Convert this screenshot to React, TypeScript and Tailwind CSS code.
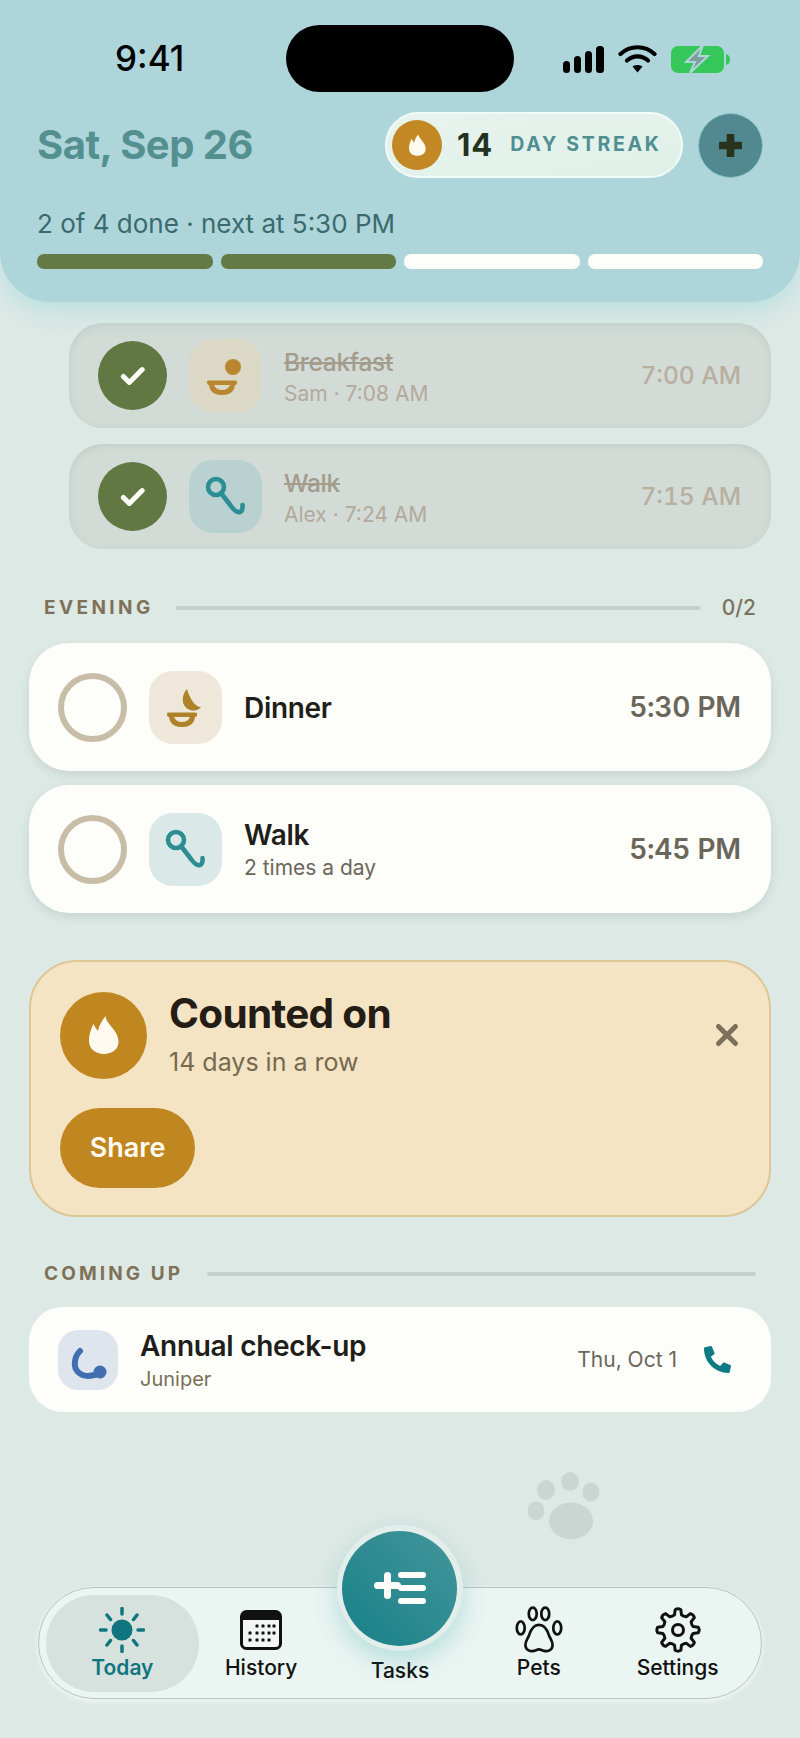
import { FaPhoneAlt } from "react-icons/fa";
import { X } from "lucide-react";

function Flame({ className }: { className?: string }) {
  return (
    <svg viewBox="0 0 30 38" className={className}>
      <path d="M16.5 0 C17 8 29 14 29.5 25 C30 33 23 38 15 38 C7 38 0 33 0 25 C0 18 2.5 12 4.5 8 C6 11 7.5 13 9 15 C10 9 13 5 16.5 0 Z" fill="#fffaf0" />
    </svg>
  );
}

function Bowl({ color }: { color: string }) {
  return (
    <g fill={color}>
      <path fillRule="evenodd" d="M18 42.5 Q18 41.5 20 41.5 H46 Q48 41.5 48 42.5 V44 Q48 46 46 46 L45 50 Q42 56 33 56 Q24 56 21 50 L20 46 Q18 46 18 44 Z M25 46 Q27 51 33 51 Q39 51 41 46 Z" />
    </g>
  );
}

function BreakfastIcon() {
  return (
    <svg viewBox="0 0 73 73" className="w-[73px] h-[73px]">
      <circle cx="44" cy="28" r="8" fill="#b8862f" />
      <Bowl color="#b8862f" />
    </svg>
  );
}

function DinnerIcon() {
  return (
    <svg viewBox="0 0 73 73" className="w-[73px] h-[73px]">
      <path d="M38 18 C32 24 32 36 41 39 C46 40.5 50 39 52 36 C46 36 41 28 38 18 Z" fill="#ad832a" />
      <Bowl color="#ad832a" />
    </svg>
  );
}

function LeashIcon() {
  return (
    <svg viewBox="0 0 73 73" className="w-[73px] h-[73px]" fill="none" stroke="#2c8e93" strokeWidth="4.6" strokeLinecap="round" strokeLinejoin="round">
      <ellipse cx="27" cy="27" rx="8" ry="8" />
      <path d="M32 33 L42 46 Q47 53 51 52 Q54 51 53.5 45" />
    </svg>
  );
}

function Check() {
  return (
    <svg viewBox="0 0 28 24" className="w-[26px] h-[22px]" fill="none" stroke="#fffdf8" strokeWidth="5.5" strokeLinecap="round" strokeLinejoin="round">
      <path d="M3.5 12.5 L10 19 L24 5" />
    </svg>
  );
}

function DoneCard({ icon, tile, title, sub, time }: { icon: React.ReactNode; tile: string; title: string; sub: string; time: string }) {
  return (
    <div className="ml-[69px] w-[702px] h-[105px] rounded-[34px] bg-[#d2dbd6] shadow-[inset_0_2px_6px_rgba(150,165,160,0.25)] flex items-center pl-[29px] pr-[30px]">
      <div className="w-[69px] h-[69px] rounded-full bg-[#617842] flex items-center justify-center">
        <Check />
      </div>
      <div className={`ml-[22px] w-[73px] h-[73px] rounded-[24px] ${tile}`}>{icon}</div>
      <div className="ml-[22px] flex-1 pt-[4px]">
        <div className="text-[24.5px] leading-[29px] font-medium tracking-[-0.3px] text-[#a39b8c] line-through">{title}</div>
        <div className="mt-[3px] text-[21px] leading-[27px] text-[#b3aa9b]">{sub}</div>
      </div>
      <div className="text-[24.5px] font-medium tabular-nums text-[#b8af9f]">{time}</div>
    </div>
  );
}

function TodoCard({ icon, tile, title, sub, time }: { icon: React.ReactNode; tile: string; title: string; sub?: string; time: string }) {
  return (
    <div className="w-[742px] h-[128px] rounded-[40px] bg-[#fdfdf9] shadow-[0_4px_10px_rgba(120,145,140,0.22)] flex items-center pl-[29px] pr-[30px]">
      <div className="w-[69px] h-[69px] rounded-full border-[6px] border-[#c8bda6]" />
      <div className={`ml-[22px] w-[73px] h-[73px] rounded-[24px] ${tile}`}>{icon}</div>
      <div className="ml-[22px] flex-1 pt-[2px]">
        <div className="text-[28px] leading-[34px] font-semibold tracking-[-0.3px] text-[#211d18]">{title}</div>
        {sub && <div className="mt-[2px] text-[21px] leading-[28px] text-[#6c665b]">{sub}</div>}
      </div>
      <div className="text-[28px] font-semibold tracking-[-0.2px] tabular-nums text-[#6b665a]">{time}</div>
    </div>
  );
}

function NavItem({ icon, label, active }: { icon: React.ReactNode; label: string; active?: boolean }) {
  return (
    <div className={`flex flex-col items-center pt-[12px] h-[97px] rounded-[48px] ${active ? "bg-[#d7e1de] -mx-[7px]" : ""}`}>
      <div className="h-[46px] flex items-center justify-center">{icon}</div>
      <div className={`text-[21px] leading-[30px] font-medium ${active ? "text-[#0f7680] font-semibold" : "text-[#111111]"}`}>{label}</div>
    </div>
  );
}

function SunIcon() {
  return (
    <svg viewBox="0 0 46 46" className="w-[46px] h-[46px]" fill="none" stroke="#0f7680" strokeWidth="3.5" strokeLinecap="round">
      <circle cx="23" cy="23" r="10.5" fill="#0f7680" stroke="none" />
      <path d="M23 1.5 V7 M23 39 V44.5 M1.5 23 H7 M39 23 H44.5 M8 8 L11.5 12.5 M38 8 L34.5 12.5 M8 38 L11.5 33.5 M38 38 L34.5 33.5" />
    </svg>
  );
}

function CalIcon() {
  return (
    <svg viewBox="0 0 42 40" className="w-[42px] h-[40px]">
      <rect x="1.5" y="1.5" width="39" height="37" rx="5" fill="#f2f7f5" stroke="#111" strokeWidth="3" />
      <path d="M1.5 6.5 a5 5 0 0 1 5 -5 h29 a5 5 0 0 1 5 5 V10 H1.5 Z" fill="#111" />
      <g fill="#111">
        {[[17, 16], [23, 16], [29, 16], [34, 16], [10, 23], [17, 23], [23, 23], [29, 23], [34, 23], [10, 30], [17, 30], [23, 30], [29, 30]].map(([x, y]) => (
          <rect key={`${x}-${y}`} x={x - 1.5} y={y - 1.5} width="3" height="3" rx="0.5" />
        ))}
      </g>
    </svg>
  );
}

function PawOutline() {
  return (
    <svg viewBox="0 0 46 46" className="w-[48px] h-[48px]" fill="none" stroke="#111" strokeWidth="2.6" strokeLinejoin="round">
      <ellipse cx="17" cy="7.5" rx="3.8" ry="6" />
      <ellipse cx="29" cy="7.5" rx="3.8" ry="6" />
      <ellipse cx="5.5" cy="21" rx="3.8" ry="6.2" />
      <ellipse cx="40.5" cy="21" rx="3.8" ry="6.2" />
      <path d="M23 18 C18 18 15 23 13.5 28 C12 32 9.5 34 10 38 C10.5 42.5 15 44 18 43 C20 42.4 21.5 41.5 23 41.5 C24.5 41.5 26 42.4 28 43 C31 44 35.5 42.5 36 38 C36.5 34 34 32 32.5 28 C31 23 28 18 23 18 Z" />
    </svg>
  );
}

function GearIcon() {
  const pt = (r: number, deg: number) => {
    const a = (deg * Math.PI) / 180;
    return `${(23 + r * Math.cos(a)).toFixed(2)} ${(23 + r * Math.sin(a)).toFixed(2)}`;
  };
  let d = "";
  for (let i = 0; i < 8; i++) {
    const a = i * 45 - 90;
    d += `${i === 0 ? "M" : "L"}${pt(15.5, a - 13)} L${pt(20.5, a - 8)} Q${pt(22, a)} ${pt(20.5, a + 8)} L${pt(15.5, a + 13)} Q${pt(14.5, a + 22.5)} ${pt(15.5, a + 32)} `;
  }
  return (
    <svg viewBox="0 0 46 46" className="w-[46px] h-[46px]" fill="none" stroke="#111" strokeWidth="3" strokeLinejoin="round">
      <path d={`${d}Z`} />
      <circle cx="23" cy="23" r="5.5" />
    </svg>
  );
}

export default function App() {
  return (
    <div className="relative w-[800px] h-[1738px] overflow-hidden bg-[#dde9e5] [font-family:Inter,sans-serif]">
      <header className="relative h-[302px] rounded-b-[50px] bg-[#aed5da] shadow-[0_8px_24px_rgba(170,220,225,0.7)] px-[37px]">
        <div className="h-[112px] flex items-start">
          <div className="w-[249px] pt-[25px] pl-[78px] text-[35px] leading-[67px] font-medium text-black">9:41</div>
          <div className="mt-[25px] w-[228px] h-[67px] rounded-full bg-black" />
          <div className="ml-[49px] mt-[45px] flex items-center gap-[14px]">
            <svg viewBox="0 0 41 27" className="w-[41px] h-[27px]" fill="#000">
              <rect x="0" y="15" width="7" height="12" rx="3.5" />
              <rect x="11" y="10" width="7" height="17" rx="3.5" />
              <rect x="22" y="5" width="7" height="22" rx="3.5" />
              <rect x="33" y="0" width="8" height="27" rx="3.5" />
            </svg>
            <svg viewBox="0 0 39 28" className="w-[39px] h-[28px]" fill="none" stroke="#000" strokeWidth="4.2" strokeLinecap="round">
              <path d="M2.5 9 C12 0 27 0 36.5 9" />
              <path d="M9 15.5 C15 10 24 10 30 15.5" />
              <path d="M19.5 27.5 L14.5 21.5 C17.5 19.5 21.5 19.5 24.5 21.5 Z" fill="#000" stroke="none" />
            </svg>
            <svg viewBox="0 0 60 28" className="w-[60px] h-[28px]">
              <rect x="0" y="1" width="53" height="27" rx="7" fill="#35c759" />
              <path d="M55 9 Q59 10 59 14.5 Q59 19 55 20 Z" fill="#35c759" />
              <path d="M32 0 L15 17 H24 L19 28 L37 11 H28 Z" fill="#7f9ea0" stroke="#aed5da" strokeWidth="2" />
            </svg>
          </div>
        </div>
        <div className="h-[66px] flex items-center justify-between">
          <div className="text-[40px] font-bold tracking-[-0.5px] text-[#53908f]">Sat, Sep 26</div>
          <div className="flex items-center">
            <div className="w-[298px] h-[66px] rounded-full border-2 border-[#f3fbf8] bg-gradient-to-br from-[#e8f4ee] to-[#dff0e8] flex items-center pl-[5px]">
              <div className="w-[50px] h-[50px] rounded-full bg-[#c38823] flex items-center justify-center">
                <Flame className="w-[17px] h-[22px]" />
              </div>
              <span className="ml-[15px] text-[31px] font-bold tracking-[1px] text-[#22321f]">14</span>
              <span className="ml-[17px] text-[19.5px] font-bold tracking-[2.7px] text-[#4f8f91]">DAY STREAK</span>
            </div>
            <div className="ml-[15px] w-[65px] h-[65px] rounded-full bg-[#52888f] border border-[#8cc9cc] flex items-center justify-center">
              <svg viewBox="0 0 24 24" className="w-[23px] h-[23px]" fill="#27331c">
                <path d="M8 1 Q8 0 9 0 H15 Q16 0 16 1 V8 H23 Q24 8 24 9 V15 Q24 16 23 16 H16 V23 Q16 24 15 24 H9 Q8 24 8 23 V16 H1 Q0 16 0 15 V9 Q0 8 1 8 H8 Z" />
              </svg>
            </div>
          </div>
        </div>
        <div className="mt-[28px] text-[26px] leading-[36px] text-[#396b6e]">2 of 4 done · next at 5:30 PM</div>
        <div className="mt-[12px] grid grid-cols-4 gap-[8px]">
          <div className="h-[15px] rounded-[7px] bg-[#647a45]" />
          <div className="h-[15px] rounded-[7px] bg-[#647a45]" />
          <div className="h-[15px] rounded-[7px] bg-[#fdfdf9]" />
          <div className="h-[15px] rounded-[7px] bg-[#fdfdf9]" />
        </div>
      </header>

      <div className="mt-[21px] flex flex-col gap-[16px]">
        <DoneCard icon={<BreakfastIcon />} tile="bg-[#dcd8c6]" title="Breakfast" sub="Sam · 7:08 AM" time="7:00 AM" />
        <DoneCard icon={<LeashIcon />} tile="bg-[#b9d1d1]" title="Walk" sub="Alex · 7:24 AM" time="7:15 AM" />
      </div>

      <div className="mt-[47px] mx-[44px] h-[24px] flex items-center">
        <span className="text-[19px] font-bold tracking-[3.4px] text-[#7f7157]">EVENING</span>
        <div className="ml-[22px] flex-1 h-[4px] rounded-full bg-[#c3d0cb]" />
        <span className="ml-[21px] text-[21px] font-medium text-[#7c7260]">0/2</span>
      </div>

      <div className="mt-[23px] ml-[29px] flex flex-col gap-[14px]">
        <TodoCard icon={<DinnerIcon />} tile="bg-[#efe8da]" title="Dinner" time="5:30 PM" />
        <TodoCard icon={<LeashIcon />} tile="bg-[#dae9e8]" title="Walk" sub="2 times a day" time="5:45 PM" />
      </div>

      <div className="mt-[47px] ml-[29px] w-[742px] h-[257px] rounded-[48px] border-2 border-[#dcc795] bg-[#f4e4c4] pl-[29px] pr-[25px] pt-[29px]">
        <div className="flex items-center">
          <div className="w-[87px] h-[87px] rounded-full bg-[#c08720] flex items-center justify-center">
            <Flame className="w-[30px] h-[38px]" />
          </div>
          <div className="ml-[22px] flex-1">
            <div className="text-[40.5px] leading-[46px] font-bold tracking-[-0.7px] text-[#241c15]">Counted on</div>
            <div className="mt-[8px] text-[25px] leading-[34px] text-[#76694f]">14 days in a row</div>
          </div>
          <X className="w-[34px] h-[34px] text-[#7c705a]" strokeWidth={3.5} />
        </div>
        <div className="mt-[29px] w-[135px] h-[80px] rounded-full bg-[#c08720] flex items-center justify-center text-[27px] font-semibold text-[#fffaf0]">Share</div>
      </div>

      <div className="mt-[45px] mx-[44px] h-[24px] flex items-center">
        <span className="text-[19px] font-bold tracking-[3.1px] text-[#7f7157]">COMING UP</span>
        <div className="ml-[24px] flex-1 h-[4px] rounded-full bg-[#c3d0cb]" />
      </div>

      <div className="mt-[21px] ml-[29px] w-[742px] h-[105px] rounded-[34px] bg-[#fdfdf9] flex items-center pl-[29px] pr-[40px]">
        <div className="w-[60px] h-[60px] rounded-[20px] bg-[#dfe5ec]">
          <svg viewBox="0 0 60 60" className="w-[60px] h-[60px]" fill="none" stroke="#3f6fb0" strokeWidth="6" strokeLinecap="round">
            <path d="M22 21 C16 27 15 37 20 42 C25 47 33 47 42 43" />
            <circle cx="42" cy="42" r="6.5" fill="#3f6fb0" stroke="none" />
          </svg>
        </div>
        <div className="ml-[22px] flex-1 pt-[2px]">
          <div className="text-[28px] leading-[34px] font-semibold tracking-[-0.3px] text-[#211d18]">Annual check-up</div>
          <div className="mt-[2px] text-[20px] leading-[28px] text-[#7a7058]">Juniper</div>
        </div>
        <span className="text-[21px] text-[#6b665a]">Thu, Oct 1</span>
        <FaPhoneAlt className="ml-[27px] w-[27px] h-[27px] text-[#0d7b82]" />
      </div>

      <div className="mt-[60px] ml-[527px] w-[74px] h-[68px]">
        <svg viewBox="0 0 74 68" className="w-[74px] h-[68px]" fill="#cad6d2">
          <ellipse cx="9" cy="39" rx="8.5" ry="9.5" />
          <ellipse cx="19" cy="18" rx="9" ry="10" />
          <ellipse cx="43" cy="9.5" rx="9" ry="9.5" />
          <ellipse cx="64" cy="20" rx="8.5" ry="9.5" />
          <ellipse cx="44" cy="49" rx="22" ry="18.5" />
        </svg>
      </div>

      <nav className="relative mt-[47px] ml-[38px] w-[724px] h-[112px] rounded-[56px] border border-[#b6c6c2] bg-[#ebf5f2] shadow-[0_2px_6px_rgba(255,255,255,0.7)] px-[14px] pt-[7px] grid grid-cols-5">
        <NavItem active icon={<SunIcon />} label="Today" />
        <NavItem icon={<CalIcon />} label="History" />
        <div className="relative flex flex-col items-center pt-[61px]">
          <div className="absolute -top-[70px] w-[126px] h-[126px] rounded-full bg-[#e3eeeb] shadow-[0_10px_24px_rgba(60,170,170,0.3)] flex items-center justify-center">
            <div className="w-[115px] h-[115px] rounded-full bg-gradient-to-tr from-[#148088] to-[#41969a] flex items-center justify-center">
              <svg viewBox="0 0 52 32" className="w-[52px] h-[32px]">
                <g fill="#fdfdf9">
                  <rect x="24" y="0" width="28" height="6" rx="3" />
                  <rect x="24" y="13" width="28" height="6" rx="3" />
                  <rect x="24" y="26" width="28" height="6" rx="3" />
                  <rect x="0" y="10" width="27" height="7" rx="3.5" />
                  <rect x="10" y="0" width="7" height="27" rx="3.5" />
                </g>
              </svg>
            </div>
          </div>
          <div className="text-[21px] leading-[30px] font-medium text-[#111111]">Tasks</div>
        </div>
        <NavItem icon={<PawOutline />} label="Pets" />
        <NavItem icon={<GearIcon />} label="Settings" />
      </nav>
    </div>
  );
}
